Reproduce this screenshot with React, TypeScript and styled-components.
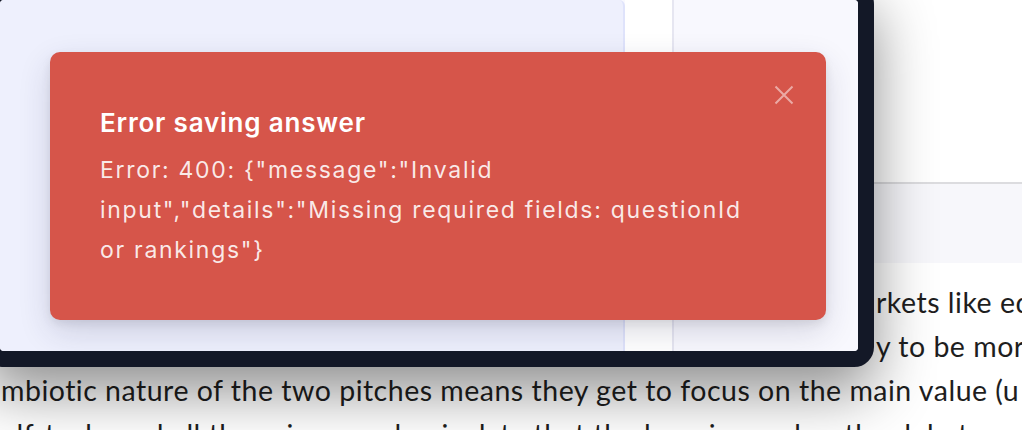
import React from "react";
import styled, { createGlobalStyle } from "styled-components";

const Global = createGlobalStyle`
  html, body { margin: 0; padding: 0; }
  body { width: 1022px; height: 430px; overflow: hidden; background: #ffffff; }
  * { box-sizing: border-box; }
`;

const Page = styled.div`
  position: relative;
  width: 1022px;
  height: 430px;
  overflow: hidden;
  background: #ffffff;
  display: flex;
  flex-direction: column;
`;

const TopArea = styled.div`
  flex-shrink: 0;
  height: 184px;
  background: #ffffff;
  border-bottom: 2px solid #dcdcdf;
`;

const Band = styled.div`
  flex-shrink: 0;
  height: 79px;
  background: #f7f7fb;
`;

const Article = styled.div`
  padding-top: 17px;
  font-family: Lato, "Noto Sans", sans-serif;
  font-size: 28.5px;
  letter-spacing: 0.5px;
  line-height: 44px;
  color: #1e1e1e;
`;

const Line = styled.div<{ $indent: number }>`
  white-space: nowrap;
  padding-left: ${(p) => p.$indent}px;
`;

const Window = styled.div`
  position: absolute;
  left: -16px;
  top: -16px;
  width: 890px;
  height: 383px;
  border: 16px solid #131827;
  border-radius: 20px;
  overflow: hidden;
  background: #f8f8fe;
  box-shadow: 0 24px 60px rgba(0, 0, 0, 0.45);
  display: flex;
`;

const MainPanel = styled.div`
  flex: 1;
  background: #eef0fd;
  border-right: 2px solid #dfe3fb;
  border-top-right-radius: 6px;
`;

const Gutter = styled.div`
  width: 47px;
  flex-shrink: 0;
  background: #ffffff;
`;

const Sidebar = styled.div`
  width: 186px;
  flex-shrink: 0;
  background: #f8f8fe;
  border-left: 2px solid #e6e6f1;
`;

const Toast = styled.div`
  position: absolute;
  left: 50px;
  top: 52px;
  width: 776px;
  background: #d6554a;
  border-radius: 10px;
  box-shadow: 0 12px 32px rgba(40, 40, 80, 0.16), 0 4px 10px rgba(0, 0, 0, 0.08);
  display: flex;
  align-items: flex-start;
  gap: 12px;
  padding: 33px 32px 50px 50px;
  font-family: Inter, "Noto Sans", sans-serif;
  color: #ffffff;
`;

const Content = styled.div`
  flex: 1;
  min-width: 0;
  padding-top: 22px;
`;

const Title = styled.div`
  font-size: 26px;
  font-weight: 600;
  letter-spacing: 0.8px;
  line-height: 31px;
`;

const Message = styled.div`
  margin-top: 12px;
  font-size: 23px;
  letter-spacing: 1.7px;
  line-height: 40px;
  color: rgba(255, 255, 255, 0.88);
`;

const CloseButton = styled.button`
  flex-shrink: 0;
  width: 20px;
  height: 20px;
  padding: 0;
  border: 0;
  background: none;
  color: rgba(255, 255, 255, 0.5);
  display: flex;
  cursor: pointer;
`;

const CloseIcon = () => (
  <svg width="20" height="20" viewBox="0 0 20 20" fill="none" stroke="currentColor" strokeWidth="2">
    <path d="M1.5 1.5L18.5 18.5M18.5 1.5L1.5 18.5" />
  </svg>
);

const errorMessage =
  'Error: 400: {"message":"Invalid input","details":"Missing required fields: questionId or rankings"}';

export default function App() {
  return (
    <>
      <Global />
      <Page>
        <TopArea />
        <Band />
        <Article>
          <Line $indent={876}>rkets like edtech and healthcare</Line>
          <Line $indent={876}>y to be more</Line>
          <Line $indent={1}>mbiotic nature of the two pitches means they get to focus on the main value (u</Line>
          <Line $indent={1}>elf-tech, and all the primary value is data that the learning makes the debate</Line>
        </Article>
        <Window>
          <MainPanel />
          <Gutter />
          <Sidebar />
          <Toast role="alert">
            <Content>
              <Title>Error saving answer</Title>
              <Message>{errorMessage}</Message>
            </Content>
            <CloseButton aria-label="Close">
              <CloseIcon />
            </CloseButton>
          </Toast>
        </Window>
      </Page>
    </>
  );
}
